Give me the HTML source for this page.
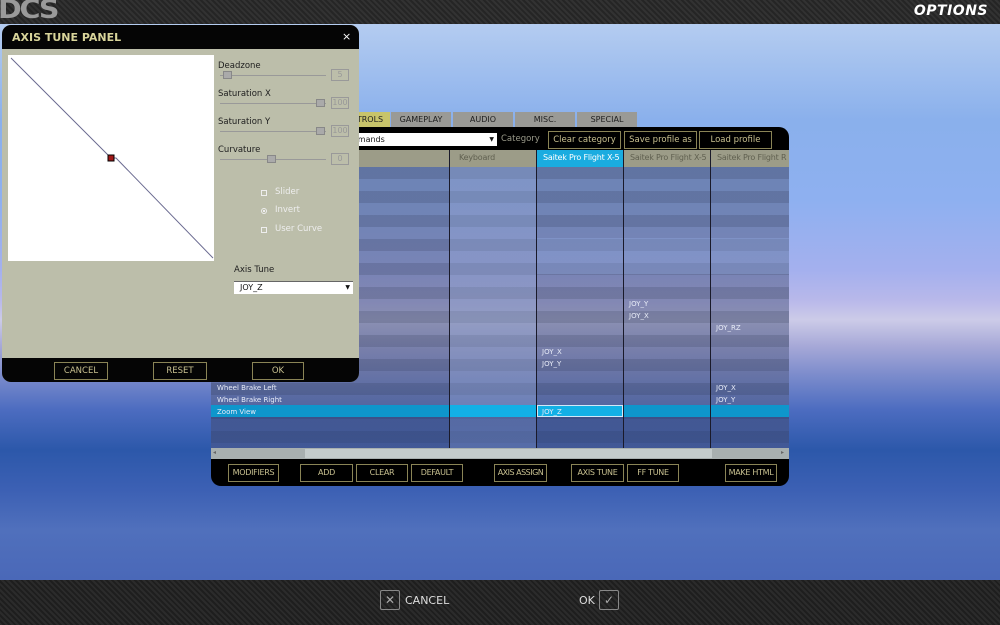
<!DOCTYPE html>
<html><head><meta charset="utf-8"><style>
*{margin:0;padding:0;box-sizing:border-box}
body{width:1000px;height:625px;overflow:hidden;position:relative;font-family:"DejaVu Sans","Liberation Sans",sans-serif;
background:linear-gradient(to bottom,#b4ccf0 25px,#8ab0ec 120px,#8eb0f0 200px,#a4b0ee 270px,#b8b8ea 300px,#cccbe8 320px,#a8aad8 345px,#7c8ccc 375px,#4c6cc0 410px,#2c58aa 450px,#3c60b4 490px,#5070bc 530px,#4a68b8 580px)}
.abs{position:absolute}
.carbon{background-color:#252525;background-image:repeating-linear-gradient(45deg,rgba(255,255,255,.06) 0 2px,transparent 2px 4px)}
.btn{position:absolute;border:1px solid #8a8456;color:#c8c090;font-size:8px;text-align:center;line-height:16px;height:18px;white-space:nowrap;overflow:hidden;letter-spacing:-.3px}
.pbtn{position:absolute;border:1px solid #8a8456;color:#c8c090;font-size:8.5px;text-align:center;line-height:16px;height:18px;white-space:nowrap;overflow:hidden}
.lbl{position:absolute;font-size:8.5px;color:#202020}
.sl{position:absolute;height:1px;background:#999;}
.knob{position:absolute;width:9px;height:8px;border:1px solid #888;background:#aaa}
.vbox{position:absolute;width:18px;height:12px;border:1px solid #999;color:#999;font-size:8px;text-align:center;line-height:10px}
.col{position:absolute;top:150px;height:298px;border-left:1px solid #1a1a2a}
.cell{position:absolute;font-size:7px;color:#e8ecf8}
.tab{position:absolute;top:112px;height:15px;background:#9a9a96;color:#202020;font-size:8px;text-align:center;line-height:15px}
.hd{position:absolute;top:153px;font-size:8px;white-space:nowrap;overflow:hidden;letter-spacing:-.2px}
</style></head><body>
<div class="abs carbon" style="left:0;top:0;width:1000px;height:24px"></div>
<div class="abs" style="left:-2px;top:-3px;font:bold 26px 'DejaVu Sans',sans-serif;color:#9a9a9a;letter-spacing:-2px;line-height:26px;transform:scaleX(1.1);transform-origin:left">DCS</div>
<div class="abs" style="right:12px;top:3px;font:italic bold 14px 'DejaVu Sans',sans-serif;color:#fff;letter-spacing:.5px">OPTIONS</div>
<div class="abs carbon" style="left:0;top:580px;width:1000px;height:45px;background-color:#1e1e1e"></div>
<div class="abs" style="left:380px;top:590px;width:20px;height:20px;border:1px solid #888;border-radius:2px;color:#aaa;font-size:12px;text-align:center;line-height:18px">✕</div>
<div class="abs" style="left:405px;top:594px;color:#ddd;font-size:11px">CANCEL</div>
<div class="abs" style="left:579px;top:594px;color:#ddd;font-size:11px">OK</div>
<div class="abs" style="left:599px;top:590px;width:20px;height:20px;border:1px solid #888;border-radius:2px;color:#aaa;font-size:12px;text-align:center;line-height:18px">✓</div>

<div class="tab" style="left:350px;width:40px;background:#c8c46a">TROLS</div>
<div class="tab" style="left:391px;width:60px">GAMEPLAY</div>
<div class="tab" style="left:453px;width:60px">AUDIO</div>
<div class="tab" style="left:515px;width:60px">MISC.</div>
<div class="tab" style="left:577px;width:60px">SPECIAL</div>
<div class="abs" style="left:211px;top:127px;width:578px;height:23px;background:#000;border-radius:0 10px 0 0"></div>
<div class="abs" style="left:350px;top:133px;width:147px;height:13px;background:#fff;font-size:8px;line-height:13px;color:#111">mmands<span style="position:absolute;right:3px;font-size:6px">▼</span></div>
<div class="abs" style="left:501px;top:134px;color:#9a9a8a;font-size:8.5px">Category</div>
<div class="pbtn" style="left:548px;top:131px;width:73px">Clear category</div>
<div class="pbtn" style="left:624px;top:131px;width:73px">Save profile as</div>
<div class="pbtn" style="left:699px;top:131px;width:73px">Load profile</div>
<div class="abs" style="left:211px;top:150px;width:578px;height:17px;background:#9c9c88"></div>
<div class="abs" style="left:536px;top:150px;width:87px;height:17px;background:#1aace0"></div>
<div class="hd" style="left:459px;color:#606050">Keyboard</div>
<div class="hd" style="left:543px;color:#fff;width:80px">Saitek Pro Flight X-5</div>
<div class="hd" style="left:630px;color:#606050;width:80px">Saitek Pro Flight X-5</div>
<div class="hd" style="left:717px;color:#606050;width:72px">Saitek Pro Flight R</div>
<div class="abs" style="left:211px;top:167px;width:578px;height:281px;background:repeating-linear-gradient(to bottom,rgba(70,80,115,.62) 0 12px,rgba(85,95,135,.55) 12px 24px)"></div>
<div class="abs" style="left:449px;top:167px;width:87px;height:281px;background:rgba(170,190,235,.3)"></div>
<div class="abs" style="left:536px;top:238px;width:253px;height:36px;background:rgba(150,175,230,.35)"></div>
<div class="abs" style="left:211px;top:405px;width:578px;height:12px;background:#0e96cc"></div>
<div class="abs" style="left:449px;top:405px;width:87px;height:12px;background:#12b0e6"></div>
<div class="abs" style="left:537px;top:405px;width:86px;height:12px;border:1px solid #d0e8f8;background:#12b0e6"></div>
<div class="abs" style="left:211px;top:417px;width:578px;height:31px;background:linear-gradient(to bottom,rgba(40,60,120,.3),rgba(60,80,150,.3))"></div>
<div class="col" style="left:449px"></div><div class="col" style="left:536px"></div><div class="col" style="left:623px"></div><div class="col" style="left:710px"></div>
<div class="cell" style="left:629px;top:300px">JOY_Y</div>
<div class="cell" style="left:629px;top:312px">JOY_X</div>
<div class="cell" style="left:716px;top:324px">JOY_RZ</div>
<div class="cell" style="left:542px;top:348px">JOY_X</div>
<div class="cell" style="left:542px;top:360px">JOY_Y</div>
<div class="cell" style="left:217px;top:384px">Wheel Brake Left</div>
<div class="cell" style="left:217px;top:396px">Wheel Brake Right</div>
<div class="cell" style="left:217px;top:408px">Zoom View</div>
<div class="cell" style="left:716px;top:384px">JOY_X</div>
<div class="cell" style="left:716px;top:396px">JOY_Y</div>
<div class="cell" style="left:542px;top:408px">JOY_Z</div>
<div class="abs" style="left:211px;top:448px;width:578px;height:11px;background:#a8b0b0"></div>
<div class="abs" style="left:305px;top:449px;width:407px;height:9px;background:#c4cccc"></div>
<div class="abs" style="left:213px;top:449px;font-size:6px;color:#666">◂</div>
<div class="abs" style="left:781px;top:449px;font-size:6px;color:#666">▸</div>
<div class="abs" style="left:211px;top:459px;width:578px;height:27px;background:#000;border-radius:0 0 10px 10px"></div>
<div class="btn" style="left:228px;top:464px;width:51px">MODIFIERS</div>
<div class="btn" style="left:300px;top:464px;width:53px">ADD</div>
<div class="btn" style="left:356px;top:464px;width:52px">CLEAR</div>
<div class="btn" style="left:411px;top:464px;width:52px">DEFAULT</div>
<div class="btn" style="left:494px;top:464px;width:53px;letter-spacing:-.5px">AXIS ASSIGN</div>
<div class="btn" style="left:571px;top:464px;width:53px">AXIS TUNE</div>
<div class="btn" style="left:627px;top:464px;width:52px">FF TUNE</div>
<div class="btn" style="left:725px;top:464px;width:52px">MAKE HTML</div>

<div class="abs" style="left:2px;top:25px;width:357px;height:357px;background:#bcbeaa;border-radius:9px;overflow:hidden">
 <div class="abs" style="left:0;top:0;width:357px;height:24px;background:#050505"></div>
 <div class="abs" style="left:10px;top:6px;font:bold 11px 'DejaVu Sans',sans-serif;color:#d8d49a">AXIS TUNE PANEL</div>
 <div class="abs" style="left:340px;top:5px;color:#fff;font-size:11px">×</div>
 <div class="abs" style="left:6px;top:30px;width:206px;height:206px;background:#fff"></div>
 <svg class="abs" style="left:6px;top:30px" width="206" height="206"><polyline points="3,3 103,103 108,103 205,203" fill="none" stroke="#6a6a90" stroke-width="1"/><rect x="100" y="100" width="6" height="6" fill="#a01818" stroke="#000"/></svg>
 <div class="lbl" style="left:216px;top:36px">Deadzone</div>
 <div class="sl" style="left:218px;top:50px;width:106px"></div><div class="knob" style="left:221px;top:46px"></div><div class="vbox" style="left:329px;top:44px">5</div>
 <div class="lbl" style="left:216px;top:64px">Saturation X</div>
 <div class="sl" style="left:218px;top:78px;width:106px"></div><div class="knob" style="left:314px;top:74px"></div><div class="vbox" style="left:329px;top:72px">100</div>
 <div class="lbl" style="left:216px;top:92px">Saturation Y</div>
 <div class="sl" style="left:218px;top:106px;width:106px"></div><div class="knob" style="left:314px;top:102px"></div><div class="vbox" style="left:329px;top:100px">100</div>
 <div class="lbl" style="left:216px;top:120px">Curvature</div>
 <div class="sl" style="left:218px;top:134px;width:106px"></div><div class="knob" style="left:265px;top:130px"></div><div class="vbox" style="left:329px;top:128px">0</div>
 <div class="abs" style="left:259px;top:165px;width:6px;height:6px;border:1px solid #eee"></div><div class="lbl" style="left:273px;top:162px;color:#eee">Slider</div>
 <div class="abs" style="left:259px;top:183px;width:6px;height:6px;border:1px solid #eee;border-radius:50%;background:radial-gradient(#eee 40%,transparent 45%)"></div><div class="lbl" style="left:273px;top:180px;color:#eee">Invert</div>
 <div class="abs" style="left:259px;top:202px;width:6px;height:6px;border:1px solid #eee"></div><div class="lbl" style="left:273px;top:199px;color:#eee">User Curve</div>
 <div class="lbl" style="left:232px;top:240px">Axis Tune</div>
 <div class="abs" style="left:232px;top:256px;width:119px;height:13px;background:#fff;border-top:1px solid #666;font-size:8px;line-height:12px;padding-left:6px;color:#111">JOY_Z<span style="position:absolute;right:3px;font-size:6px">▼</span></div>
 <div class="abs" style="left:0;top:333px;width:357px;height:24px;background:#050505"></div>
 <div class="pbtn" style="left:52px;top:337px;width:54px">CANCEL</div>
 <div class="pbtn" style="left:151px;top:337px;width:54px">RESET</div>
 <div class="pbtn" style="left:250px;top:337px;width:52px">OK</div>
</div>
</body></html>
